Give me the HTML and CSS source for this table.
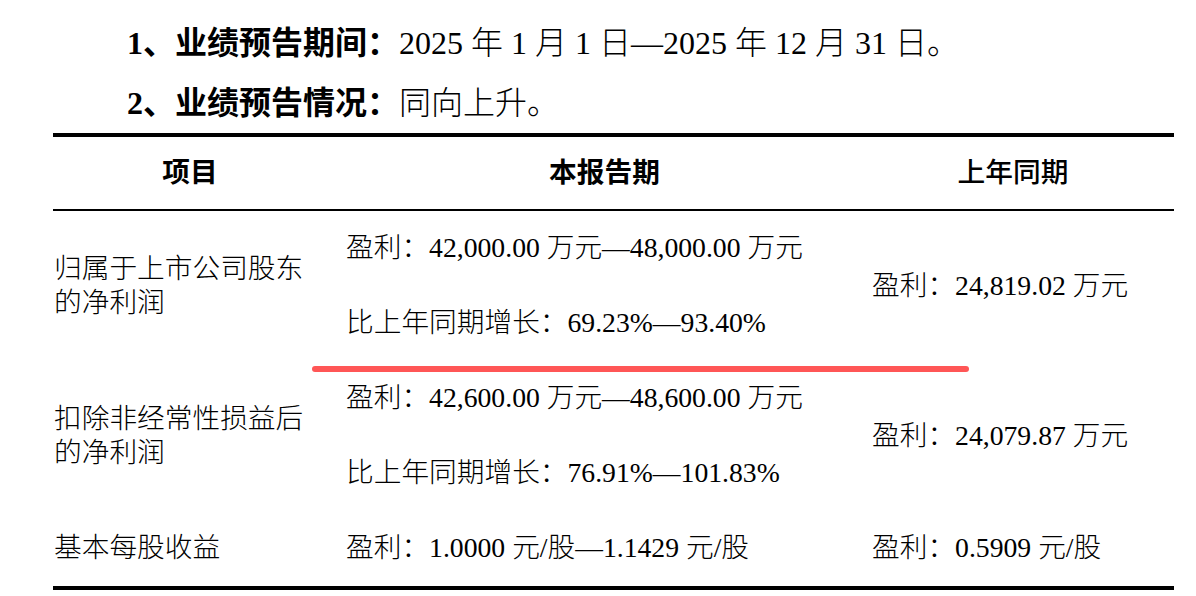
FILE: index.html
```html
<!DOCTYPE html>
<html lang="zh-CN">
<head>
<meta charset="utf-8">
<title>业绩预告</title>
<link rel="stylesheet" href="styles.css">
</head>
<body>
<div class="page">
  <p class="heading"><span class="label">1、业绩预告期间：</span>2025 年 1 月 1 日—2025 年 12 月 31 日。</p>
  <p class="heading"><span class="label">2、业绩预告情况：</span>同向上升。</p>
  <table class="report">
    <colgroup>
      <col class="c-item">
      <col class="c-now">
      <col class="c-prev">
    </colgroup>
    <thead>
      <tr>
        <th class="h-item">项目</th>
        <th class="h-now">本报告期</th>
        <th class="h-prev">上年同期</th>
      </tr>
    </thead>
    <tbody>
      <tr>
        <td class="item">归属于上市公司股东<br>的净利润</td>
        <td class="now">
          <p class="line">盈利：42,000.00 万元—48,000.00 万元</p>
          <p class="line second">比上年同期增长：69.23%—93.40%</p>
        </td>
        <td class="prev">盈利：24,819.02 万元</td>
      </tr>
      <tr>
        <td class="item">扣除非经常性损益后<br>的净利润</td>
        <td class="now">
          <p class="line">盈利：42,600.00 万元—48,600.00 万元</p>
          <p class="line second">比上年同期增长：76.91%—101.83%</p>
        </td>
        <td class="prev">盈利：24,079.87 万元</td>
      </tr>
      <tr>
        <td class="item">基本每股收益</td>
        <td class="now">
          <p class="line">盈利：1.0000 元/股—1.1429 元/股</p>
        </td>
        <td class="prev">盈利：0.5909 元/股</td>
      </tr>
    </tbody>
  </table>
  <div class="mark"></div>
</div>
</body>
</html>
```

FILE: styles.css
```css
html, body {
  margin: 0;
  padding: 0;
  background: #ffffff;
}

body {
  font-family: "Liberation Serif", "Noto Sans CJK SC", serif;
  color: #000000;
  font-weight: 300;
}

.page {
  position: relative;
  width: 1196px;
  height: 596px;
  padding-top: 13px;
  box-sizing: border-box;
  overflow: hidden;
}

.heading {
  margin: 0;
  padding-left: 127px;
  font-size: 32px;
  line-height: 60px;
  white-space: nowrap;
}

.heading .label {
  font-weight: 700;
}

.report {
  margin-left: 53px;
  width: 1121px;
  table-layout: fixed;
  border-collapse: separate;
  border-spacing: 0;
  border-top: 4px solid #000000;
  border-bottom: 4px solid #000000;
  font-size: 27.7px;
}

.c-item { width: 280px; }
.c-now { width: 533px; }
.c-prev { width: 308px; }

.report th {
  padding: 0;
  line-height: 72px;
  border-bottom: 2px solid #000000;
  text-align: center;
  font-weight: 700;
  white-space: nowrap;
}

.report th.h-item { padding-right: 6px; }
.report th.h-now { padding-left: 10px; }
.report th.h-prev { padding-right: 14px; font-weight: 500; }

.report td {
  padding: 17px 0 18px 0;
  vertical-align: middle;
  white-space: nowrap;
  line-height: 40px;
}

.report td.item {
  padding-left: 1px;
  line-height: 34px;
}

.report td.now {
  padding-left: 13px;
}

.report td.prev {
  padding-left: 6px;
}

.line {
  margin: 0;
  line-height: 40px;
}

.line.second {
  margin-top: 35px;
}

.mark {
  position: absolute;
  left: 312px;
  top: 366px;
  width: 657px;
  height: 6px;
  border-radius: 3px;
  background: #ff5656;
}
```
